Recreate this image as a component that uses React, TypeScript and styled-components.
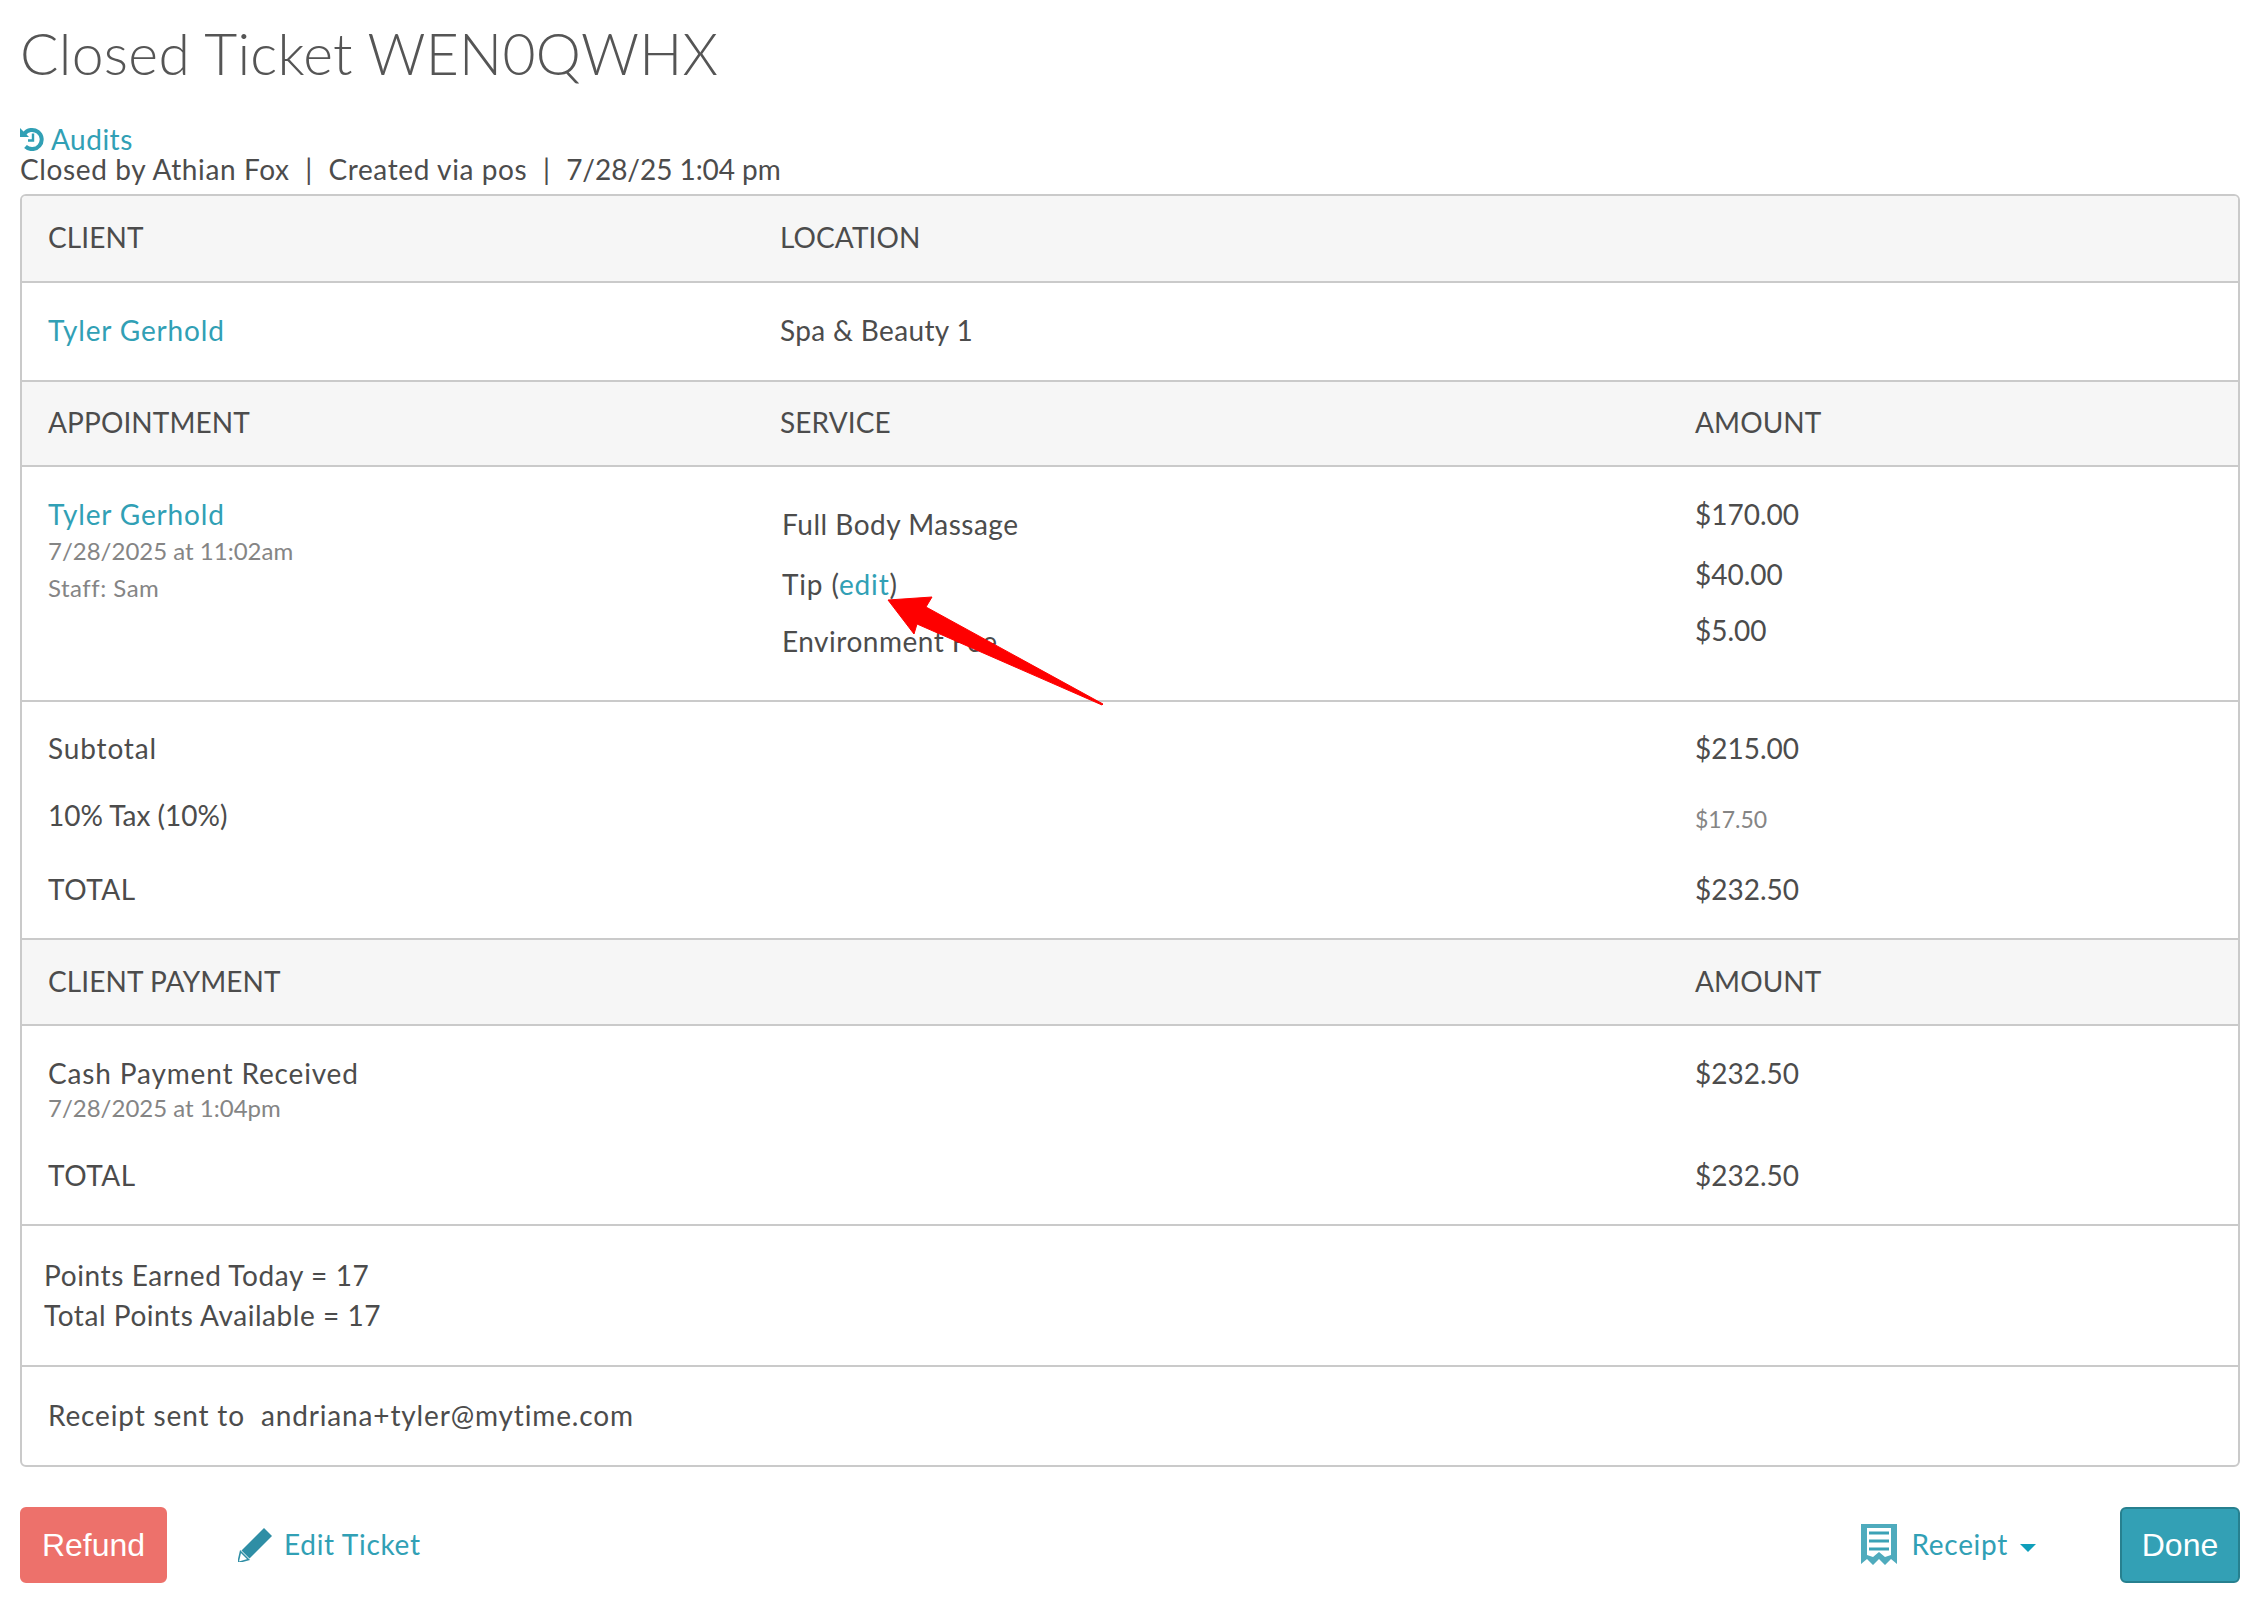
import React from "react"
import styled, { createGlobalStyle } from "styled-components"

const TEAL = "#31a0b5"
const TEXT = "#4c4c4c"
const MUTED = "#858585"
const LINE = "#cacaca"

const GlobalStyle = createGlobalStyle`
  html, body {
    margin: 0;
    padding: 0;
    background: #fff;
  }
  body {
    font-family: "Lato", "Open Sans", sans-serif;
    font-size: 28px;
    letter-spacing: 0.5px;
    color: ${TEXT};
  }
`

const Page = styled.div`
  position: relative;
  width: 2260px;
  height: 1599px;
  padding: 0 20px;
  box-sizing: border-box;
  overflow: hidden;
`

const Title = styled.h1`
  margin: 0;
  padding-top: 17px;
  font-size: 57px;
  line-height: 72px;
  font-weight: 300;
  letter-spacing: 0.3px;
  color: #555;
`

const AuditLink = styled.a`
  display: flex;
  align-items: center;
  gap: 7px;
  margin-top: 35px;
  height: 30px;
  color: ${TEAL};
`

const Meta = styled.div`
  height: 40px;
  line-height: 31px;
  letter-spacing: 0.62px;
  white-space: pre;
`

const MetaDate = styled.span`
  letter-spacing: -0.05px;
`

const Panel = styled.div`
  border: 2px solid ${LINE};
  border-radius: 6px;
  overflow: hidden;
`

const Row = styled.div<{ $height: number; $head?: boolean }>`
  display: grid;
  grid-template-columns: 732px 915px 1fr;
  box-sizing: border-box;
  height: ${({ $height }) => $height}px;
  padding-left: 26px;
  border-bottom: 2px solid ${LINE};
  background: ${({ $head }) => ($head ? "#f6f6f6" : "#fff")};
  align-items: ${({ $head }) => ($head ? "center" : "start")};

  &:last-child {
    border-bottom: none;
  }
`

const Plain = styled.div<{ $height: number; $left: number; $lift: number }>`
  box-sizing: border-box;
  height: ${({ $height }) => $height}px;
  padding-left: ${({ $left }) => $left}px;
  padding-bottom: ${({ $lift }) => $lift}px;
  border-bottom: 2px solid ${LINE};
  display: flex;
  flex-direction: column;
  justify-content: center;

  &:last-child {
    border-bottom: none;
  }
`

const Label = styled.div`
  text-transform: uppercase;
  line-height: 32px;
  padding-bottom: 3px;
  letter-spacing: 0.1px;
`

const Cell = styled.div<{ $top: number }>`
  padding-top: ${({ $top }) => $top}px;
  display: flex;
  flex-direction: column;
`

const Line = styled.div<{ $height?: number; $indent?: number; $track?: number }>`
  height: ${({ $height }) => $height ?? 32}px;
  line-height: 32px;
  margin-left: ${({ $indent }) => $indent ?? 0}px;
  letter-spacing: ${({ $track }) => $track ?? 0.5}px;
  white-space: pre;
`

const Amount = styled(Line)`
  letter-spacing: 0;
`

const Sub = styled.div<{ $height?: number; $wide?: boolean }>`
  height: ${({ $height }) => $height ?? 37}px;
  line-height: 37px;
  font-size: 24px;
  letter-spacing: ${({ $wide }) => ($wide ? 0.5 : 0)}px;
  color: ${MUTED};
`

const SmallAmount = styled.div<{ $height?: number }>`
  height: ${({ $height }) => $height ?? 32}px;
  line-height: 32px;
  font-size: 23px;
  letter-spacing: 0;
  color: ${MUTED};
`

const TealLink = styled.a`
  color: ${TEAL};
`

const Footer = styled.div`
  display: flex;
  align-items: center;
  margin-top: 40px;
`

const SolidButton = styled.button<{ $bg: string; $edge: string; $width: number }>`
  width: ${({ $width }) => $width}px;
  height: 76px;
  padding: 0;
  border: 2px solid ${({ $edge }) => $edge};
  border-radius: 6px;
  background: ${({ $bg }) => $bg};
  color: #fff;
  font-family: "Liberation Sans", Arial, sans-serif;
  font-size: 32px;
`

const ActionLink = styled.a`
  display: flex;
  align-items: center;
  color: ${TEAL};
`

const ActionText = styled.span`
  padding-bottom: 3px;
  letter-spacing: 0.7px;
`

const EditAction = styled(ActionLink)`
  margin-left: 71px;
  gap: 12px;
`

const ReceiptAction = styled(ActionLink)`
  margin-left: auto;
  margin-right: 84px;
  gap: 15px;
`

const Caret = styled.span`
  width: 0;
  height: 0;
  margin-left: -3px;
  margin-top: 6px;
  border-left: 8px solid transparent;
  border-right: 8px solid transparent;
  border-top: 8px solid #0f9fbb;
`

const ArrowOverlay = styled.svg`
  position: absolute;
  top: 0;
  left: 0;
  pointer-events: none;
`

const HistoryIcon = () => (
  <svg width="24" height="24" viewBox="0 0 24 24" fill="none">
    <path d="M0 1v9h9z" fill={TEAL} />
    <path
      d="M4.2 7A9.6 9.6 0 1 1 5.5 19.5"
      stroke={TEAL}
      strokeWidth="4"
    />
    <path d="M13 6.5v7H8" stroke={TEAL} strokeWidth="2.4" />
  </svg>
)

const PencilIcon = () => (
  <svg width="34" height="34" viewBox="0 0 34 34">
    <path d="M26 0l8 8-22.5 22.5-8-8z" fill="#2f8ea5" />
    <path d="M2.5 23.5l8 8L0 34.5z" fill="#fff" stroke="#2f8ea5" strokeWidth="1.6" />
  </svg>
)

const ReceiptIcon = () => (
  <svg width="36" height="42" viewBox="0 0 36 42">
    <path d="M0 0H36V40L30 35 24 41 18 35 12 41 6 35 0 40Z" fill="#4fabbd" />
    <path d="M6 4H30V31L24 33 18 28 12 33 6 31Z" fill="#fff" />
    <path d="M8 9H28M8 17H28M8 25H28" stroke="#3ba2b6" strokeWidth="3" />
  </svg>
)

const App: React.FC = () => (
  <Page>
    <GlobalStyle />
    <Title>Closed Ticket WEN0QWHX</Title>
    <AuditLink>
      <HistoryIcon />
      Audits
    </AuditLink>
    <Meta>
      Closed by Athian Fox  |  Created via pos  |  <MetaDate>7/28/25 1:04 pm</MetaDate>
    </Meta>

    <Panel>
      <Row $head $height={87}>
        <Label>Client</Label>
        <Label>Location</Label>
      </Row>
      <Row $height={99}>
        <Cell $top={31}>
          <Line $track={0.85}>
            <TealLink>Tyler Gerhold</TealLink>
          </Line>
        </Cell>
        <Cell $top={31}>
          <Line $track={0.35}>Spa &amp; Beauty 1</Line>
        </Cell>
      </Row>
      <Row $head $height={85}>
        <Label>Appointment</Label>
        <Label>Service</Label>
        <Label>Amount</Label>
      </Row>
      <Row $height={235}>
        <Cell $top={31}>
          <Line $height={34} $track={0.85}>
            <TealLink>Tyler Gerhold</TealLink>
          </Line>
          <Sub>7/28/2025 at 11:02am</Sub>
          <Sub $wide>Staff: Sam</Sub>
        </Cell>
        <Cell $top={41}>
          <Line $height={60} $indent={2}>Full Body Massage</Line>
          <Line $height={57} $indent={2} $track={0.85}>
            Tip (<TealLink>edit</TealLink>)
          </Line>
          <Line $indent={2}>Environment Fee</Line>
        </Cell>
        <Cell $top={31}>
          <Amount $height={60}>$170.00</Amount>
          <Amount $height={56}>$40.00</Amount>
          <Amount>$5.00</Amount>
        </Cell>
      </Row>
      <Row $height={238}>
        <Cell $top={30}>
          <Line $height={67} $track={0.85}>Subtotal</Line>
          <Amount $height={74}>10% Tax (10%)</Amount>
          <Line>TOTAL</Line>
        </Cell>
        <div />
        <Cell $top={30}>
          <Amount $height={71}>$215.00</Amount>
          <SmallAmount $height={70}>$17.50</SmallAmount>
          <Amount>$232.50</Amount>
        </Cell>
      </Row>
      <Row $head $height={86}>
        <Label>Client Payment</Label>
        <div />
        <Label>Amount</Label>
      </Row>
      <Row $height={200}>
        <Cell $top={31}>
          <Line $track={0.85}>Cash Payment Received</Line>
          <Sub $height={70}>7/28/2025 at 1:04pm</Sub>
          <Line>TOTAL</Line>
        </Cell>
        <div />
        <Cell $top={31}>
          <Amount $height={102}>$232.50</Amount>
          <Amount>$232.50</Amount>
        </Cell>
      </Row>
      <Plain $height={141} $left={22} $lift={1}>
        <Line $height={40} $track={0.6}>Points Earned Today = 17</Line>
        <Line $track={0.55}>Total Points Available = 17</Line>
      </Plain>
      <Plain $height={98} $left={26} $lift={3}>
        <Line $track={0.85}>Receipt sent to  andriana+tyler@mytime.com</Line>
      </Plain>
    </Panel>

    <Footer>
      <SolidButton $bg="#ed716b" $edge="#ed716b" $width={147}>Refund</SolidButton>
      <EditAction>
        <PencilIcon />
        <ActionText>Edit Ticket</ActionText>
      </EditAction>
      <ReceiptAction>
        <ReceiptIcon />
        <ActionText>Receipt</ActionText>
        <Caret />
      </ReceiptAction>
      <SolidButton $bg="#33a0b5" $edge="#27808f" $width={120}>Done</SolidButton>
    </Footer>

    <ArrowOverlay width="2260" height="1599" viewBox="0 0 2260 1599">
      <path
        d="M888 600L932 597L926 607L1103 704L1102 705L917 624L914 634Z"
        fill="#fe0000"
        stroke="#fe0000"
        strokeWidth="1"
        strokeLinejoin="round"
      />
    </ArrowOverlay>
  </Page>
)

export default App
